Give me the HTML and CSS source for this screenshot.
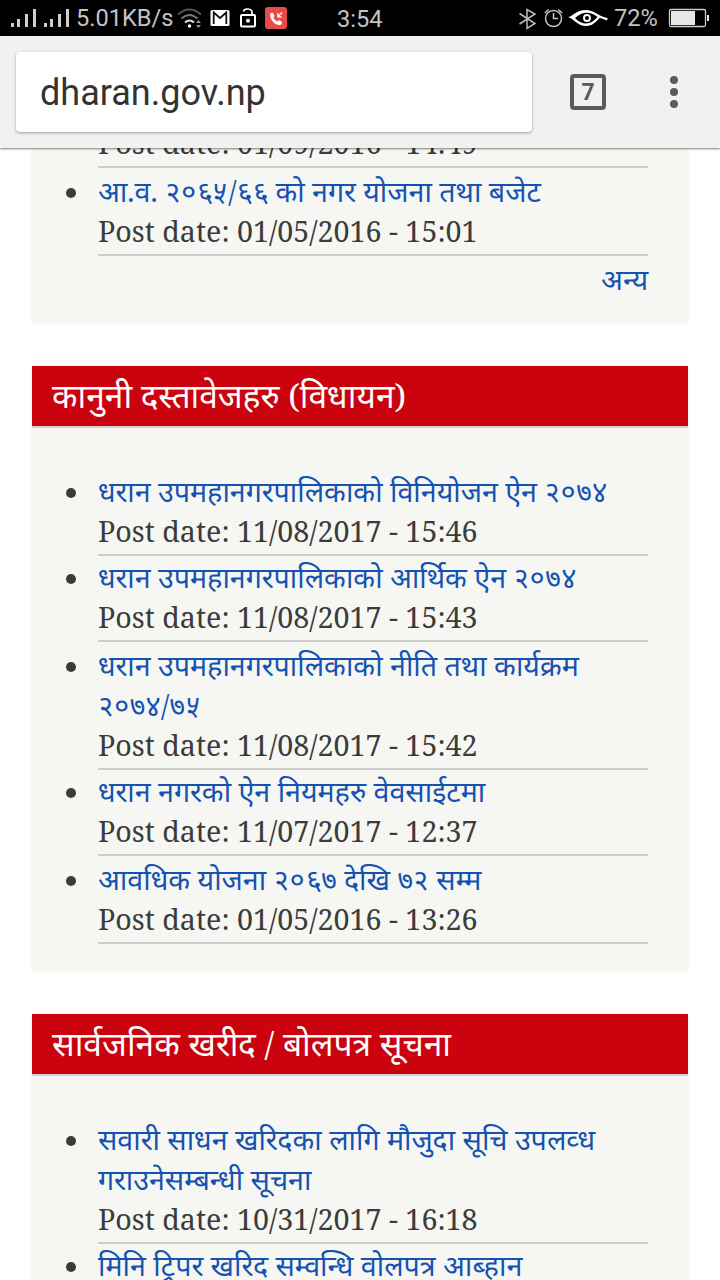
FILE: index.html
```html
<!DOCTYPE html>
<html lang="en">
<head>
<meta charset="utf-8">
<title>dharan.gov.np</title>
<link rel="stylesheet" href="styles.css">
</head>
<body>
<div class="screen">
<header class="status">
  <svg class="status-art" width="720" height="36" viewBox="0 0 720 36">
    <g fill="#d0d0d0">
      <path d="M11 23h3v4h-3zM17 19h3v8h-3zM25 14h3v13h-3zM33 9h3v18h-3zM44 23h3v4h-3zM50 19h3v8h-3zM58 14h3v13h-3zM66 9h3v18h-3z"/>
    </g>
    <g fill="none" stroke-width="2">
      <path d="M178 14.500q11.500-10 23 0" stroke="#555"/>
      <path d="M181.500 18.500q8-7 16 0" stroke="#777"/>
      <path d="M185 22.500q4.500-4 9 0" stroke="#ddd"/>
    </g>
    <circle cx="189.500" cy="26" r="1.700" fill="#fff"/>
    <path d="M196 23l2.500-3 2.500 3zM196 25l2.500 3 2.500-3z" fill="#999"/>
    <rect x="210.500" y="10" width="19" height="16" rx="1.500" fill="#fff"/>
    <path d="M213.700 24V12.500l6.300 5.500 6.300-5.500V24" fill="none" stroke="#111" stroke-width="1.800"/>
    <rect x="241" y="15" width="14" height="11.500" rx="1" fill="none" stroke="#fff" stroke-width="2"/>
    <path d="M243.500 11.500c.5-3.500 8.500-3.500 8.500 1V15" fill="none" stroke="#fff" stroke-width="1.700"/>
    <circle cx="248" cy="20.700" r="2" fill="#fff"/>
    <rect x="265" y="7" width="22" height="22" rx="3" fill="#ea4b4a"/>
    <path d="M270.300 13.200l2.400-.5 2 3.200-1.300 1.500c.8 1.900 2.200 3.200 4 4l1.600-1.300 3 2-.5 2.500c-6 2-12.500-5.500-11.200-11.400z" fill="#fff"/>
    <path d="M282 12.500l-3.500 3.500M277.800 13v3.800h3.800" fill="none" stroke="#fff" stroke-width="1.300"/>
    <path d="M519.500 13.500L535 23.500l-8 5V9.500l8 4.500-15.500 10" fill="none" stroke="#bbb" stroke-width="1.500"/>
    <circle cx="553.500" cy="18.500" r="8" fill="none" stroke="#c5c5c5" stroke-width="1.500"/>
    <path d="M553.500 13v5.500h4.500M544.800 13l4-3.500M558.200 9.500l4 3.500" fill="none" stroke="#c5c5c5" stroke-width="1.500"/>
    <path d="M568 17c4 0 8-7 18-7 8 0 10.500 5.500 21.500 8l-.3 2.500c-3-1-5.200-2.500-7.700-2.500-3 3.500-7 8-13.500 8-8.500 0-11-6.500-18-9zM575 18c7 7.500 15.500 7.500 22.500-1-8-6-15-5.500-22.500 1z" fill="#fff" fill-rule="evenodd"/>
    <circle cx="587" cy="18" r="3" fill="none" stroke="#fff" stroke-width="1.900"/>
    <rect x="669.500" y="9.500" width="36" height="17" rx="1.500" fill="none" stroke="#ccc" stroke-width="1.300"/>
    <path d="M671 11h24v14h-24zM707 15h2v6h-2z" fill="#e6e6e6"/>
  </svg>
  <span class="speed">5.01KB/s</span>
  <span class="clock">3:54</span>
  <span class="percent">72%</span>
</header>
<nav class="toolbar">
  <div class="address">dharan.gov.np</div>
  <div class="tabs">7</div>
  <div class="menu"><i></i><i></i><i></i></div>
</nav>
<main class="page">
  <section class="block first">
    <ul class="list">
      <li class="cut"><p class="date">Post date: 01/09/2016 - 14:49</p></li>
      <li class="tall"><a>आ.व. २०६<span lang="ne">५</span>/६६ को नगर योजना तथा बजेट</a><p class="date">Post date: 01/05/2016 - 15:01</p></li>
    </ul>
    <div class="more"><a>अन्य</a></div>
  </section>
  <section class="block">
    <h2>कानुनी दस्तावेजहरु (विधायन)</h2>
    <ul class="list">
      <li><a>धरान उपमहानगरपालिकाको विनियोजन ऐन २०७४</a><p class="date">Post date: 11/08/2017 - 15:46</p></li>
      <li><a>धरान उपमहानगरपालिकाको आर्थिक ऐन २०७४</a><p class="date">Post date: 11/08/2017 - 15:43</p></li>
      <li class="tall"><a>धरान उपमहानगरपालिकाको नीति तथा कार्यक्रम<br>२०७४/७<span lang="ne">५</span></a><p class="date">Post date: 11/08/2017 - 15:42</p></li>
      <li><a>धरान नगरको ऐन नियमहरु वेवसाईटमा</a><p class="date">Post date: 11/07/2017 - 12:37</p></li>
      <li class="tall"><a>आवधिक योजना २०६७ देखि ७२ सम्म</a><p class="date">Post date: 01/05/2016 - 13:26</p></li>
    </ul>
  </section>
  <section class="block">
    <h2>सार्वजनिक खरीद / बोलपत्र सूचना</h2>
    <ul class="list">
      <li><a>सवारी साधन खरिदका लागि मौजुदा सूचि उपलव्ध<br>गराउनेसम्बन्धी सूचना</a><p class="date">Post date: 10/31/2017 - 16:18</p></li>
      <li><a>मिनि ट्रिपर खरिद सम्वन्धि वोलपत्र आब्हान</a></li>
    </ul>
  </section>
</main>
</div>
</body>
</html>
```

FILE: styles.css
```css
* { box-sizing: border-box; }
body { margin: 0; background: #fff; }
.screen { width: 720px; height: 1280px; overflow: hidden; display: flex; flex-direction: column; }
.status { position: relative; flex: 0 0 36px; background: #000; color: #c4c4c4; font: 23.6px/36px Roboto, sans-serif; }
.status-art { position: absolute; left: 0; top: 0; }
.speed, .clock, .percent { position: absolute; top: 0; white-space: nowrap; }
.speed { left: 76px; }
.clock { left: 337px; top: 1px; }
.percent { left: 614px; }
.toolbar { position: relative; z-index: 1; flex: 0 0 112px; padding: 16px 0 0 16px; display: flex; background: #f1f1f1; box-shadow: 0 1px 2px rgba(0,0,0,.5); }
.address { width: 516px; height: 80px; padding-left: 24px; background: #fff; border-radius: 4px; box-shadow: 0 1px 3px rgba(0,0,0,.35); color: #333; font: 36px/82px Roboto, sans-serif; }
.tabs { width: 36px; height: 36px; margin: 22px 0 0 38px; border: 4px solid #5a5a5a; border-radius: 4px; color: #5a5a5a; font: bold 23px/30px Roboto, sans-serif; text-align: center; }
.menu { margin: 24px 0 0 64px; display: flex; flex-direction: column; gap: 4px; }
.menu i { width: 8px; height: 8px; border-radius: 50%; background: #5a5a5a; }
.page { flex: 1; min-height: 0; overflow: hidden; padding: 0 30px; display: flex; flex-direction: column; gap: 40px; color: #3b3b3b; font: 28.65px/40px "Noto Serif", "Noto Sans Devanagari UI", "Noto Sans Devanagari", "Noto Sans", serif; }
.block { flex: none; height: 608px; background: #f6f7f3; border: 2px solid #fafaf9; }
.first { height: 176px; border-top: 0; }
h2 { margin: 0; height: 62px; padding-left: 20px; background: #ca030e; border-bottom: 2px solid #d2d2d4; color: #fff; font-weight: 400; font-size: 33.55px; line-height: 59px; white-space: nowrap; }
.list { margin: 0; padding: 42px 40px 0 66px; list-style: none; }
.list li { position: relative; padding-top: 1px; padding-bottom: 3px; border-bottom: 2px solid #ccc; white-space: nowrap; }
.list li.tall { padding-top: 3px; }
.list li::before { content: ""; position: absolute; left: -32px; top: 18px; width: 10px; height: 10px; border-radius: 50%; background: #3b3b3b; }
.list li.tall::before { top: 20px; }
.list li.cut::before { display: none; }
.first .list { padding-top: 0; }
.first .list .cut { margin-top: -26px; }
.list a { display: block; color: #1452b2; }
.date { margin: 0; }
.more { padding: 3px 40px 0 0; text-align: right; color: #1452b2; }
```
